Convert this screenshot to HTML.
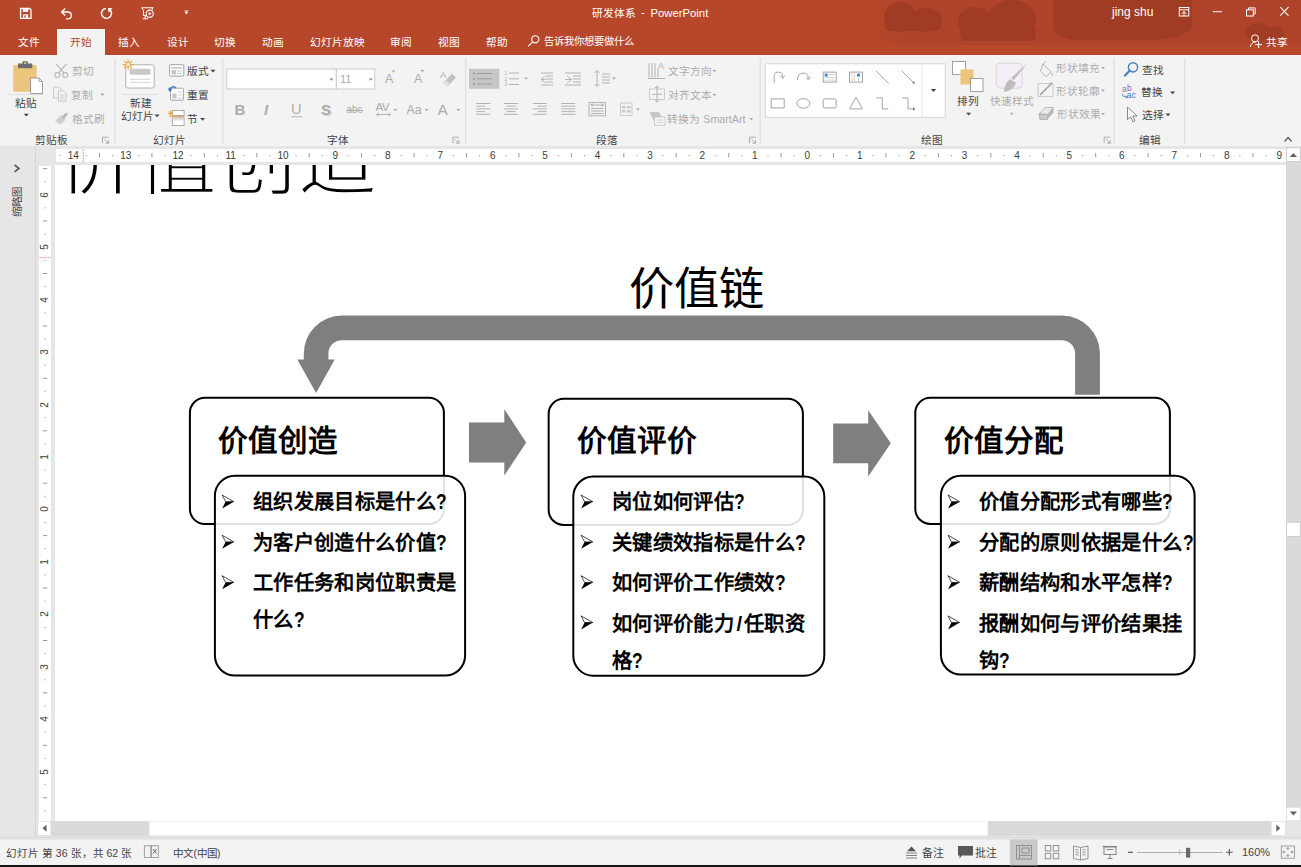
<!DOCTYPE html>
<html lang="zh-CN"><head><meta charset="utf-8"><title>PowerPoint</title>
<style>
*{margin:0;padding:0;box-sizing:border-box}
html,body{width:1301px;height:867px;overflow:hidden;background:#E6E6E6;font-family:"Liberation Sans",sans-serif;position:relative}
.a{position:absolute;white-space:nowrap;line-height:1}
.w{color:#fff}
.t{font-size:11px;color:#444}
.g{color:#A6A6A6}
.r{font-size:10.7px;color:#444}
.d{color:#ABABAB}
.rn{font-size:10px;color:#3C3C3C}
.bl{font-size:20.3px;letter-spacing:0.35px;font-weight:700;line-height:36.8px;color:#000;white-space:nowrap}
.bl i{display:block;height:3.8px}
.q{display:inline-block;transform:scale(0.86,1.1);transform-origin:0 62%;letter-spacing:0}
.hd{font-size:29.5px;font-weight:700;color:#000}
</style></head><body>

<!-- ===== TITLE BAR + TABS ===== -->
<div class="a" style="left:0;top:0;width:1301px;height:55px;background:#B7472A;overflow:hidden">
 <svg class="a" style="left:0;top:0" width="1301" height="55">
  <defs><linearGradient id="tg" x1="0" x2="1" y1="0" y2="0"><stop offset="0" stop-color="#A9412A" stop-opacity="0"/><stop offset="0.12" stop-color="#A9412A" stop-opacity="0.55"/><stop offset="1" stop-color="#A9412A" stop-opacity="0.55"/></linearGradient></defs>
  <rect x="860" y="0" width="441" height="45" fill="url(#tg)"/>
  <g fill="#A03C24">
   <ellipse cx="900" cy="17" rx="16" ry="15"/><ellipse cx="926" cy="20" rx="16" ry="12"/><rect x="885" y="18" width="56" height="13" rx="5"/>
   <ellipse cx="975" cy="22" rx="17" ry="15"/><ellipse cx="1012" cy="18" rx="24" ry="18"/><rect x="960" y="24" width="76" height="17" rx="6"/>
   <path d="M1053 0 L1192 0 L1192 28 Q1180 40 1150 40 L1075 40 Q1060 38 1053 30 Z"/>
   <ellipse cx="1258" cy="32" rx="13" ry="9"/><ellipse cx="1275" cy="33" rx="9" ry="7"/>
  </g>
 </svg>
 <div id="qat"></div>
 <span class="a w" style="left:592px;top:8px;font-size:10.7px">研发体系</span><span class="a w" style="left:641px;top:7px;font-size:11px">-</span><span class="a w" style="left:650.5px;top:7.5px;font-size:11.3px">PowerPoint</span>
 <span class="a w" style="left:1112px;top:6px;font-size:12px">jing shu</span>
 <!-- tabs -->
 <div class="a" style="left:57px;top:29px;width:48px;height:26px;background:#F3F3F3"></div>
 <span class="a w" style="left:18px;top:37px;font-size:10.7px">文件</span>
 <span class="a" style="left:70px;top:37px;font-size:10.7px;color:#B7472A">开始</span>
 <span class="a w" style="left:118px;top:37px;font-size:10.7px">插入</span>
 <span class="a w" style="left:167px;top:37px;font-size:10.7px">设计</span>
 <span class="a w" style="left:214px;top:37px;font-size:10.7px">切换</span>
 <span class="a w" style="left:262px;top:37px;font-size:10.7px">动画</span>
 <span class="a w" style="left:310px;top:37px;font-size:10.7px">幻灯片放映</span>
 <span class="a w" style="left:390px;top:37px;font-size:10.7px">审阅</span>
 <span class="a w" style="left:438px;top:37px;font-size:10.7px">视图</span>
 <span class="a w" style="left:486px;top:37px;font-size:10.7px">帮助</span>
 <span class="a w" style="left:543.5px;top:37.3px;font-size:10.35px">告诉我你想要做什么</span>
 <span class="a w" style="left:1266px;top:37px;font-size:10.7px">共享</span>
</div>

<!-- ===== RIBBON ===== -->
<div class="a" style="left:0;top:55px;width:1301px;height:91px;background:#F3F3F3"></div>
<!-- RIBBON-START -->
<svg class="a" style="left:0;top:0" width="1301" height="160"><rect x="114.5" y="58" width="1" height="86" fill="#DADADA"/><rect x="222.3" y="58" width="1" height="86" fill="#DADADA"/><rect x="465.2" y="58" width="1" height="86" fill="#DADADA"/><rect x="759.7" y="58" width="1" height="86" fill="#DADADA"/><rect x="1113.6" y="58" width="1" height="86" fill="#DADADA"/><rect x="1184.2" y="58" width="1" height="86" fill="#DADADA"/><rect x="13.2" y="64.9" width="23.5" height="26.8" rx="1.5" fill="#EAC57B"/><rect x="18" y="63.5" width="14.3" height="4.7" fill="#6D6D6D"/><rect x="22.5" y="61.3" width="5.3" height="3.5" rx="1" fill="#6D6D6D"/><rect x="24" y="62.4" width="2.3" height="1.5" fill="#EAC57B"/><path d="M30.5 78 L39 78 L42.5 81.5 L42.5 93.5 L30.5 93.5 Z" fill="#fff" stroke="#8A8A8A" stroke-width="0.8"/><path d="M39 78 L39 81.5 L42.5 81.5" fill="none" stroke="#8A8A8A" stroke-width="0.8"/><rect x="6.6" y="94" width="36.7" height="0.8" fill="#D9D9D9"/><path d="M23.8 113.8 L28.8 113.8 L26.3 116.5 Z" fill="#444"/><g fill="none" stroke="#B4B4B4" stroke-width="1.1"><circle cx="57.3" cy="75" r="2.5"/><circle cx="65.3" cy="75" r="2.5"/><path d="M58.5 72.8 L66.5 63.8 M64.1 72.8 L56 63.8"/></g><g fill="#F3F3F3" stroke="#C9C4CC" stroke-width="0.9"><path d="M53.5 87.2 L59 87.2 L61 89.2 L61 98 L53.5 98 Z"/><path d="M58.5 91 L64 91 L66 93 L66 101.3 L58.5 101.3 Z"/></g><g stroke="#C9C4CC" stroke-width="0.8"><path d="M60 95 L64.5 95 M60 97 L64.5 97 M60 99 L64.5 99"/></g><path d="M100.2 93.5 L104.8 93.5 L102.5 96.0 Z" fill="#ABABAB"/><path d="M55 121 L61 115.5 L65.5 120 L60 124.5 Z" fill="#D0CCD2"/><path d="M61.5 116.5 L66.5 112.5 L68 114 L64 119 Z" fill="#B8B4BA"/><path d="M102.5 143.2 L102.5 137.2 L108.5 137.2" fill="none" stroke="#9A9A9A" stroke-width="0.8"/><path d="M104.5 139.2 L108.5 143.2 M108.5 140.2 L108.5 143.2 L105.5 143.2" fill="none" stroke="#9A9A9A" stroke-width="0.8"/><rect x="125.8" y="64.8" width="28.4" height="23.2" rx="2" fill="#fff" stroke="#A8A8A8" stroke-width="0.9"/><rect x="129.7" y="68.7" width="20.8" height="6" fill="#C9C9C9"/><path d="M130 79.3 L150.5 79.3 M130 82.4 L150.5 82.4" stroke="#C9C9C9" stroke-width="0.8"/><g stroke="#E8A53A" stroke-width="1.1"><path d="M128.1 59.4 L128.1 69.8 M122.6 64.6 L133.6 64.6 M124.2 60.8 L132 68.4 M124.2 68.4 L132 60.8"/></g><circle cx="128.1" cy="64.6" r="2.2" fill="#F3F3F3" stroke="#E8A53A" stroke-width="0.9"/><rect x="121" y="94" width="37.8" height="0.8" fill="#D9D9D9"/><path d="M154.5 114.5 L159.5 114.5 L157.0 117.2 Z" fill="#444"/><rect x="169.6" y="64.7" width="14.2" height="11.4" rx="1" fill="#fff" stroke="#8E8E8E" stroke-width="0.8"/><rect x="171.5" y="67" width="10.5" height="1.6" fill="#C6C6C6"/><rect x="171.5" y="70" width="4.5" height="4.5" fill="#C6C6C6"/><path d="M177 71 L182 71 M177 73.5 L182 73.5" stroke="#C6C6C6" stroke-width="0.8"/><path d="M210.5 69.8 L215.5 69.8 L213.0 72.5 Z" fill="#444"/><rect x="170.6" y="88.2" width="12.8" height="12" rx="1" fill="#fff" stroke="#8E8E8E" stroke-width="0.8"/><rect x="172.5" y="93.5" width="4" height="5" fill="#C6C6C6"/><path d="M177.5 92 L182 92 M177.5 95 L182 95 M177.5 98 L182 98" stroke="#C6C6C6" stroke-width="0.8"/><path d="M169 90.5 Q172 84.5 176 88" fill="none" stroke="#3F7CC1" stroke-width="1.5"/><path d="M168 87.5 L169.6 92 L172.3 89.3 Z" fill="#3F7CC1"/><rect x="172.3" y="110.5" width="11.8" height="5" fill="#fff" stroke="#9A9A9A" stroke-width="0.8"/><rect x="172.3" y="118" width="11.8" height="7.5" fill="#fff" stroke="#9A9A9A" stroke-width="0.8"/><path d="M169.5 116.6 L184.5 116.6" stroke="#F0A860" stroke-width="1.2"/><path d="M173.5 119.8 L183 119.8" stroke="#C6C6C6" stroke-width="0.8"/><g stroke="#E8A53A" stroke-width="0.9"><path d="M170.6 110.3 L170.6 116 M167.8 113.2 L173.4 113.2 M168.6 111.2 L172.6 115.2 M168.6 115.2 L172.6 111.2"/></g><path d="M200.1 118.0 L205.1 118.0 L202.6 120.8 Z" fill="#444"/><rect x="226.8" y="69" width="109.5" height="20" fill="#fff" stroke="#C6C6C6" stroke-width="0.9"/><rect x="336.3" y="69" width="38.5" height="20" fill="#fff" stroke="#C6C6C6" stroke-width="0.9"/><path d="M329.5 78.5 L333.5 78.5 L331.5 80.7 Z" fill="#8A8A8A"/><path d="M368.8 78.5 L372.8 78.5 L370.8 80.7 Z" fill="#8A8A8A"/><path d="M391.5 70.5 L395.5 70.5 L393.5 72.7 Z" fill="#ABABAB"/><path d="M420.5 70 L424.5 70 L422.5 72.2 Z" fill="#ABABAB"/><path d="M446 80 L452 73.5 L456 77.5 L450 84 Z" fill="#C2C2C2"/><path d="M446 80 L450 84 L447.5 86 L443.5 82.5 Z" fill="#E3E3E3" stroke="#C2C2C2" stroke-width="0.6"/><rect x="291.5" y="116.3" width="10.7" height="0.9" fill="#ABABAB"/><rect x="346.4" y="110" width="16.8" height="0.9" fill="#ABABAB"/><path d="M376.5 114.5 L390.5 114.5 M376.5 114.5 L378.5 112.8 M376.5 114.5 L378.5 116.2 M390.5 114.5 L388.5 112.8 M390.5 114.5 L388.5 116.2" stroke="#ABABAB" stroke-width="0.9" fill="none"/><path d="M393.3 109.0 L397.3 109.0 L395.3 111.2 Z" fill="#ABABAB"/><path d="M424.6 109.0 L428.6 109.0 L426.6 111.2 Z" fill="#ABABAB"/><path d="M456.3 109.0 L460.3 109.0 L458.3 111.2 Z" fill="#ABABAB"/><path d="M452.9 143.2 L452.9 137.2 L458.9 137.2" fill="none" stroke="#9A9A9A" stroke-width="0.8"/><path d="M454.9 139.2 L458.9 143.2 M458.9 140.2 L458.9 143.2 L455.9 143.2" fill="none" stroke="#9A9A9A" stroke-width="0.8"/><rect x="469" y="68.8" width="30.3" height="20" fill="#C6C6C6"/><g stroke="#9A9A9A" stroke-width="0.9"><path d="M477 73.5 L492 73.5 M477 78.8 L492 78.8 M477 84 L492 84"/></g><g fill="#9A9A9A"><circle cx="474" cy="73.5" r="0.9"/><circle cx="474" cy="78.8" r="0.9"/><circle cx="474" cy="84" r="0.9"/></g><g stroke="#ABABAB" stroke-width="0.9"><path d="M509 73 L519 73 M509 78.8 L519 78.8 M509 84.5 L519 84.5"/></g><path d="M524.0 77.5 L528.0 77.5 L526.0 79.7 Z" fill="#ABABAB"/><g stroke="#ABABAB" stroke-width="0.9"><path d="M541 73 L553 73 M546 76 L553 76 M546 79 L553 79 M546 82 L553 82 M541 85 L553 85"/><path d="M541 79.5 L545.5 76 M541 79.5 L545.5 83 M541 79.5 L545.5 79.5"/></g><g stroke="#ABABAB" stroke-width="0.9"><path d="M565 73 L581 73 M573 76 L581 76 M573 79 L581 79 M573 82 L581 82 M565 85 L581 85"/><path d="M571.5 79.5 L567 76 M571.5 79.5 L567 83 M571.5 79.5 L565 79.5"/></g><g stroke="#ABABAB" stroke-width="0.9" fill="none"><path d="M597 70.5 L597 86.5 M594.5 73 L597 70.5 L599.5 73 M594.5 84 L597 86.5 L599.5 84"/><path d="M602 74 L610 74 M602 77 L610 77 M602 80 L610 80 M602 83 L610 83"/></g><path d="M612.0 77.5 L616.0 77.5 L614.0 79.7 Z" fill="#ABABAB"/><path d="M476.2 103.5 L490.2 103.5 M476.2 106.2 L485.2 106.2 M476.2 108.9 L490.2 108.9 M476.2 111.6 L485.2 111.6 M476.2 114.3 L490.2 114.3 " stroke="#ABABAB" stroke-width="0.9"/><path d="M504.0 103.5 L518.0 103.5 M506.5 106.2 L515.5 106.2 M504.0 108.9 L518.0 108.9 M506.5 111.6 L515.5 111.6 M504.0 114.3 L518.0 114.3 " stroke="#ABABAB" stroke-width="0.9"/><path d="M532.7 103.5 L546.7 103.5 M537.7 106.2 L546.7 106.2 M532.7 108.9 L546.7 108.9 M537.7 111.6 L546.7 111.6 M532.7 114.3 L546.7 114.3 " stroke="#ABABAB" stroke-width="0.9"/><path d="M561.3 103.5 L575.3 103.5 M561.3 106.2 L575.3 106.2 M561.3 108.9 L575.3 108.9 M561.3 111.6 L575.3 111.6 M561.3 114.3 L575.3 114.3 " stroke="#ABABAB" stroke-width="0.9"/><g stroke="#ABABAB" stroke-width="0.9" fill="none"><rect x="589" y="102.6" width="16.5" height="13.2"/><path d="M591 105 L603.5 105 M591 105 L593 103.7 M591 105 L593 106.3 M603.5 105 L601.5 103.7 M603.5 105 L601.5 106.3 M591 108.5 L603.5 108.5 M591 111 L603.5 111 M591 113.5 L603.5 113.5"/></g><g stroke="#C9C4CC" stroke-width="0.9" fill="none"><rect x="620.5" y="103" width="11.5" height="12.5"/></g><g fill="#C9C9C9"><rect x="622" y="106" width="3.5" height="2.5"/><rect x="627" y="106" width="3.5" height="2.5"/><rect x="622" y="110" width="3.5" height="2.5"/><rect x="627" y="110" width="3.5" height="2.5"/></g><path d="M636.0 108.5 L640.0 108.5 L638.0 110.7 Z" fill="#ABABAB"/><g stroke="#ABABAB" stroke-width="0.9" fill="none"><path d="M649 63 L649 77.5 M652 63 L652 77.5 M655 63 L655 77.5 M658 69 L658 77.5 M648 78.5 L665 78.5"/></g><path d="M712.5 70.0 L716.5 70.0 L714.5 72.2 Z" fill="#ABABAB"/><g stroke="#C9C4CC" stroke-width="0.9" fill="#F7F4F8"><rect x="649.5" y="89" width="15" height="10.5"/></g><g stroke="#ABABAB" stroke-width="0.9" fill="none"><path d="M657 86 L657 102.2 M655 88 L657 86 L659 88 M655 100.2 L657 102.2 L659 100.2 M652 94.3 L662 94.3"/></g><path d="M712.5 94.0 L716.5 94.0 L714.5 96.2 Z" fill="#ABABAB"/><g fill="#C7C7C7"><path d="M649.4 112 L659 112 L663 120 L653.5 120 Z"/></g><g stroke="#C9C4CC" stroke-width="0.9" fill="#F7F4F8"><rect x="654.5" y="117" width="10.5" height="8.3"/></g><path d="M656.5 120 L663 120 M656.5 122.5 L663 122.5" stroke="#C9C9C9" stroke-width="0.8"/><path d="M749.2 118.0 L753.2 118.0 L751.2 120.2 Z" fill="#ABABAB"/><path d="M749.5 143.2 L749.5 137.2 L755.5 137.2" fill="none" stroke="#9A9A9A" stroke-width="0.8"/><path d="M751.5 139.2 L755.5 143.2 M755.5 140.2 L755.5 143.2 L752.5 143.2" fill="none" stroke="#9A9A9A" stroke-width="0.8"/><rect x="765.2" y="63.8" width="180" height="53.5" fill="#fff" stroke="#D2D2D2" stroke-width="0.9"/><rect x="921.6" y="64" width="0.9" height="53" fill="#E2E2E2"/><path d="M930.8 89.0 L936.2 89.0 L933.5 92.0 Z" fill="#444"/><g stroke="#9A9A9A" stroke-width="0.9" fill="none"><path d="M774.2 83.1 L774.2 76.1 Q774.2 72.1 778.7 72.1 Q782.7 72.1 782.7 77.1 M780.2 75.6 L782.7 78.6 L784.7 75.6"/><path d="M797.4 80.1 Q797.4 73.1 803.4 73.1 Q808.4 73.1 808.4 78.1 M806.4 77.1 L808.4 80.1 L810.4 77.1"/><rect x="823.2" y="72.1" width="13" height="10"/><rect x="849.5" y="72.1" width="13" height="10"/><path d="M875.8 70.6 L888.8 83.6"/><path d="M901.5 70.6 L914.5 83.6"/><rect x="771.2" y="98.9" width="13" height="9"/><ellipse cx="803.4" cy="103.4" rx="6.5" ry="4.8"/><rect x="823.2" y="98.9" width="13" height="9" rx="1.5"/><path d="M849.5 108.9 L856 97.4 L862.5 108.9 Z"/><path d="M876.3 97.9 L882.3 97.9 L882.3 108.9 L888.3 108.9"/><path d="M902 97.9 L908 97.9 L908 108.9 L914 108.9"/></g><g fill="#7F7F7F"><path d="M915 84.1 L912 83.1 L914 81.1 Z"/><path d="M915.5 108.9 L913 106.9 L913 110.9 Z"/></g><g fill="#4A8ACB"><rect x="824.7" y="73.6" width="3" height="3"/><rect x="857" y="73.6" width="3" height="3"/></g><g stroke="#BBBBBB" stroke-width="0.7"><path d="M828.7 74.6 L834.7 74.6 M824.7 77.6 L834.7 77.6 M824.7 80.1 L834.7 80.1 M852 73.1 L852 81.1 M854.5 73.1 L854.5 81.1 M858.5 77.6 L858.5 81.1"/></g><rect x="952.5" y="61.5" width="13" height="13" fill="#fff" stroke="#8A8A8A" stroke-width="0.8"/><rect x="960.5" y="69.5" width="13" height="15" fill="#EAC57B"/><rect x="970.5" y="78.5" width="12.5" height="13" fill="#fff" stroke="#8A8A8A" stroke-width="0.8"/><path d="M966.1 112.8 L971.1 112.8 L968.6 115.5 Z" fill="#444"/><rect x="996.2" y="63.2" width="26" height="25" rx="4" fill="#F4EEF6" stroke="#D8CFDC" stroke-width="0.9"/><path d="M1027.5 63 L1014 80 L1011 78 Z" fill="#BDBDBD"/><path d="M1010 79 Q1004 84 1004 92 Q1013 91 1016 83 Z" fill="#BDBDBD"/><path d="M1009.8 112.8 L1013.8 112.8 L1011.8 115.0 Z" fill="#ABABAB"/><g stroke="#ABABAB" stroke-width="0.9" fill="none"><path d="M1043 64 L1051 72 L1046 76.5 L1040.5 71 Z M1043 64 L1046 61"/></g><path d="M1052 72 Q1053.5 75 1052.5 76 Q1051 75 1052 72 Z" fill="#ABABAB"/><path d="M1101.0 67.0 L1105.0 67.0 L1103.0 69.2 Z" fill="#ABABAB"/><g stroke="#ABABAB" stroke-width="0.9" fill="none"><path d="M1038 83.5 L1053 83.5 L1053 96.5 L1038 96.5 Z" stroke="#C9C4CC"/><path d="M1040 95 L1052 83" stroke="#9A9A9A" stroke-width="1.4"/></g><path d="M1101.0 89.5 L1105.0 89.5 L1103.0 91.7 Z" fill="#ABABAB"/><path d="M1039 114 L1045 107.5 L1053.5 107.5 L1047.5 114.5 Z" fill="#E9E9E9" stroke="#ABABAB" stroke-width="0.8"/><path d="M1039 114 L1047.5 114.5 L1047.5 119.5 L1040 119.5 Z" fill="#C9C9C9" stroke="#ABABAB" stroke-width="0.8"/><path d="M1047.5 114.5 L1053.5 107.5 L1053.5 112.5 L1047.5 119.5 Z" fill="#B8B8B8"/><path d="M1101.0 113.0 L1105.0 113.0 L1103.0 115.2 Z" fill="#ABABAB"/><path d="M1104.2 143.2 L1104.2 137.2 L1110.2 137.2" fill="none" stroke="#9A9A9A" stroke-width="0.8"/><path d="M1106.2 139.2 L1110.2 143.2 M1110.2 140.2 L1110.2 143.2 L1107.2 143.2" fill="none" stroke="#9A9A9A" stroke-width="0.8"/><circle cx="1133" cy="67.3" r="4.6" fill="none" stroke="#4682C3" stroke-width="1.5"/><path d="M1129.8 70.5 L1125 75.5" stroke="#4682C3" stroke-width="2.2" stroke-linecap="round"/><path d="M1122.5 94 Q1122.5 97 1125.5 97 L1127 97 M1125.8 95.6 L1127.2 97 L1125.8 98.4" fill="none" stroke="#3E7CC0" stroke-width="0.9"/><path d="M1170.1 91.5 L1175.1 91.5 L1172.6 94.2 Z" fill="#444"/><path d="M1127.5 107 L1127.5 119.5 L1130.5 116.8 L1133 122 L1135 121 L1132.8 116 L1137 116 Z" fill="#fff" stroke="#6A6A6A" stroke-width="0.8" stroke-linejoin="round"/><path d="M1165.5 113.5 L1170.5 113.5 L1168.0 116.2 Z" fill="#444"/><path d="M1284.6 141.5 L1288.1 137.5 L1291.6 141.5" fill="none" stroke="#555" stroke-width="1.2"/></svg>
<span class="a r" style="left:14.8px;top:98px;">粘贴</span>
<span class="a r d" style="left:71.8px;top:66.3px;">剪切</span>
<span class="a r d" style="left:70.7px;top:89.8px;">复制</span>
<span class="a r d" style="left:71.8px;top:114px;">格式刷</span>
<span class="a r" style="left:35px;top:134.8px;">剪贴板</span>
<span class="a r" style="left:129.7px;top:97.6px;">新建</span>
<span class="a r" style="left:121px;top:110.8px;">幻灯片</span>
<span class="a r" style="left:187.3px;top:65.8px;">版式</span>
<span class="a r" style="left:187.3px;top:89.8px;">重置</span>
<span class="a r" style="left:187.3px;top:114px;">节</span>
<span class="a r" style="left:152.7px;top:135px;">幻灯片</span>
<span class="a r d" style="left:340px;top:74px;font-size:11px">11</span>
<span class="a r d" style="left:385px;top:72.5px;font-size:12.5px">A</span>
<span class="a r d" style="left:414px;top:72.5px;font-size:12.5px">A</span>
<span class="a r d" style="left:440px;top:70px;font-size:9.5px">A</span>
<span class="a r d" style="left:234.5px;top:102px;font-size:15px;font-weight:700">B</span>
<span class="a r d" style="left:264px;top:102px;font-size:15px;font-style:italic;font-weight:700">I</span>
<span class="a r d" style="left:291px;top:102px;font-size:14.5px">U</span>
<span class="a r d" style="left:321px;top:102px;font-size:15px;font-weight:700;text-shadow:1px 1px 0 #D8D8D8">S</span>
<span class="a r d" style="left:346.5px;top:105px;font-size:10px">abc</span>
<span class="a r d" style="left:375.5px;top:101.5px;font-size:11.5px;letter-spacing:-0.5px">AV</span>
<span class="a r d" style="left:406.5px;top:103.5px;font-size:12.5px">Aa</span>
<span class="a r d" style="left:437.5px;top:101.5px;font-size:15.5px">A</span>
<span class="a r" style="left:326.6px;top:134.8px;">字体</span>
<span class="a r d" style="left:504.5px;top:70.8px;font-size:5px">1</span>
<span class="a r d" style="left:504.5px;top:76.6px;font-size:5px">2</span>
<span class="a r d" style="left:504.5px;top:82.3px;font-size:5px">3</span>
<span class="a r d" style="left:658px;top:61.5px;font-size:9px">A</span>
<span class="a r d" style="left:667.8px;top:66px;">文字方向</span>
<span class="a r d" style="left:667.8px;top:89.8px;">对齐文本</span>
<span class="a r d" style="left:667.3px;top:113.8px;">转换为 SmartArt</span>
<span class="a r" style="left:595.8px;top:134.8px;">段落</span>
<span class="a r" style="left:957px;top:96px;">排列</span>
<span class="a r d" style="left:989.6px;top:96px;">快速样式</span>
<span class="a r d" style="left:1056px;top:63.3px;">形状填充</span>
<span class="a r d" style="left:1056px;top:85.8px;">形状轮廓</span>
<span class="a r d" style="left:1057.2px;top:109.3px;">形状效果</span>
<span class="a r" style="left:920.5px;top:134.8px;">绘图</span>
<span class="a r" style="left:1141.7px;top:64.8px;">查找</span>
<span class="a r" style="left:1122px;top:84.5px;font-size:8.5px;color:#7F7F7F">a</span>
<span class="a r" style="left:1127px;top:84px;font-size:8.5px;color:#9B59B6">b</span>
<span class="a r" style="left:1126.5px;top:90.5px;font-size:9px;color:#3E7CC0">ac</span>
<span class="a r" style="left:1141px;top:87.2px;">替换</span>
<span class="a r" style="left:1141.7px;top:109.6px;">选择</span>
<span class="a r" style="left:1138.6px;top:134.6px;">编辑</span>
<!-- RIBBON-END -->

<!-- ===== WORK AREA ===== -->
<!-- thumbnails collapsed pane -->
<div class="a" style="left:35px;top:146px;width:1px;height:692px;background:#D4D4D4"></div>
<!-- horizontal ruler -->
<div class="a" style="left:56px;top:149px;width:1230px;height:13px;background:#fff"></div>
<!-- vertical ruler -->
<div class="a" style="left:39px;top:166px;width:12px;height:655px;background:#fff"></div>

<!-- slide viewport -->
<div class="a" style="left:55px;top:165px;width:1231px;height:656px;background:#fff;overflow:hidden">
 <div class="a" style="left:-55px;top:-165px;width:1301px;height:867px">
  <span class="a" style="left:57px;top:121px;font-size:80px;color:#000;-webkit-text-stroke:2.4px #fff">价值创造</span>
  <span class="a" style="left:628.5px;top:267px;font-size:45.3px;color:#000">价值链</span>
  <svg class="a" style="left:0;top:0" width="1301" height="867">
   <path fill="#7F7F7F" d="M1099.9 394.8 L1099.9 353.5 A38 38 0 0 0 1061.9 315.5 L341.8 315.5 A38 38 0 0 0 303.8 353.5 L303.8 359.5 L297.3 359.5 L316.1 393 L334.7 359.5 L328.4 359.5 L328.4 353.5 A13.3 13.3 0 0 1 341.7 340.2 L1061.8 340.2 A13.3 13.3 0 0 1 1075.1 353.5 L1075.1 394.8 Z"/>
   <path fill="#7F7F7F" d="M469 422.6 L504.3 422.6 L504.3 409.2 L526.2 442.4 L504.3 475.6 L504.3 462.5 L469 462.5 Z"/>
   <path fill="#7F7F7F" d="M833.2 423.5 L868.2 423.5 L868.2 410.3 L890.8 443.2 L868.2 476.4 L868.2 463.2 L833.2 463.2 Z"/>
   <g fill="#fff" stroke="#000" stroke-width="2">
    <rect x="189.9" y="397.8" width="254" height="126.2" rx="15"/>
    <rect x="548.65" y="398.8" width="254.25" height="126.1" rx="15"/>
    <rect x="915.3" y="397.8" width="254.6" height="126.1" rx="15"/>
   </g>
   <g fill="#fff" fill-opacity="0.88" stroke="#000" stroke-width="2">
    <rect x="214.9" y="475.75" width="250.2" height="199.85" rx="20"/>
    <rect x="573.3" y="476.6" width="251" height="199.15" rx="20"/>
    <rect x="940.9" y="475.75" width="253.7" height="198.85" rx="20"/>
   </g>
   <g id="bullets"><path d="M222.1 495.0 L233.8 501.7 L225.6 501.7 Z" fill="#fff" stroke="#000" stroke-width="0.7" stroke-linejoin="miter"/><path d="M225.6 501.7 L233.8 501.7 L222.1 508.6 Z" fill="#000"/><path d="M222.1 535.2 L233.8 541.9 L225.6 541.9 Z" fill="#fff" stroke="#000" stroke-width="0.7" stroke-linejoin="miter"/><path d="M225.6 541.9 L233.8 541.9 L222.1 548.8 Z" fill="#000"/><path d="M222.1 575.7 L233.8 582.4 L225.6 582.4 Z" fill="#fff" stroke="#000" stroke-width="0.7" stroke-linejoin="miter"/><path d="M225.6 582.4 L233.8 582.4 L222.1 589.3 Z" fill="#000"/><path d="M581.1 495.0 L592.8 501.7 L584.6 501.7 Z" fill="#fff" stroke="#000" stroke-width="0.7" stroke-linejoin="miter"/><path d="M584.6 501.7 L592.8 501.7 L581.1 508.6 Z" fill="#000"/><path d="M581.1 535.2 L592.8 541.9 L584.6 541.9 Z" fill="#fff" stroke="#000" stroke-width="0.7" stroke-linejoin="miter"/><path d="M584.6 541.9 L592.8 541.9 L581.1 548.8 Z" fill="#000"/><path d="M581.1 575.7 L592.8 582.4 L584.6 582.4 Z" fill="#fff" stroke="#000" stroke-width="0.7" stroke-linejoin="miter"/><path d="M584.6 582.4 L592.8 582.4 L581.1 589.3 Z" fill="#000"/><path d="M581.1 615.9 L592.8 622.6 L584.6 622.6 Z" fill="#fff" stroke="#000" stroke-width="0.7" stroke-linejoin="miter"/><path d="M584.6 622.6 L592.8 622.6 L581.1 629.5 Z" fill="#000"/><path d="M948.0 495.0 L959.7 501.7 L951.5 501.7 Z" fill="#fff" stroke="#000" stroke-width="0.7" stroke-linejoin="miter"/><path d="M951.5 501.7 L959.7 501.7 L948.0 508.6 Z" fill="#000"/><path d="M948.0 535.2 L959.7 541.9 L951.5 541.9 Z" fill="#fff" stroke="#000" stroke-width="0.7" stroke-linejoin="miter"/><path d="M951.5 541.9 L959.7 541.9 L948.0 548.8 Z" fill="#000"/><path d="M948.0 575.7 L959.7 582.4 L951.5 582.4 Z" fill="#fff" stroke="#000" stroke-width="0.7" stroke-linejoin="miter"/><path d="M951.5 582.4 L959.7 582.4 L948.0 589.3 Z" fill="#000"/><path d="M948.0 615.9 L959.7 622.6 L951.5 622.6 Z" fill="#fff" stroke="#000" stroke-width="0.7" stroke-linejoin="miter"/><path d="M951.5 622.6 L959.7 622.6 L948.0 629.5 Z" fill="#000"/></g>
  </svg>
  <span class="a hd" style="left:217.5px;top:426px">价值创造</span>
  <span class="a hd" style="left:576.5px;top:426px">价值评价</span>
  <span class="a hd" style="left:943.5px;top:426px">价值分配</span>
  <div class="a bl" style="left:253px;top:484px">组织发展目标是什么<span class="q">?</span><br><i></i>为客户创造什么价值<span class="q">?</span><br><i></i>工作任务和岗位职责是<br>什么<span class="q">?</span></div>
  <div class="a bl" style="left:612px;top:484px">岗位如何评估<span class="q">?</span><br><i></i>关键绩效指标是什么<span class="q">?</span><br><i></i>如何评价工作绩效<span class="q">?</span><br><i></i>如何评价能力<span style="margin:0 1.5px 0 2.5px">/</span>任职资<br>格<span class="q">?</span></div>
  <div class="a bl" style="left:979px;top:484px">价值分配形式有哪些<span class="q">?</span><br><i></i>分配的原则依据是什么<span class="q">?</span><br><i></i>薪酬结构和水平怎样<span class="q">?</span><br><i></i>报酬如何与评价结果挂<br>钩<span class="q">?</span></div>
 </div>
</div>

<!-- scrollbars -->
<div class="a" style="left:1286px;top:147px;width:15px;height:674px;background:#DADADA"></div>
<div class="a" style="left:37px;top:821px;width:1249px;height:15px;background:#DADADA"></div>

<!-- ===== STATUS BAR ===== -->
<div class="a" style="left:0;top:837px;width:1301px;height:1px;background:#D8D8D8"></div>
<div class="a" style="left:0;top:840px;width:1301px;height:27px;background:#F3F3F3"></div>
<div class="a" style="left:0;top:865px;width:1301px;height:2px;background:#151515"></div>
<!-- CHROME-START -->
<svg class="a" style="left:0;top:0" width="1301" height="867"><g fill="none" stroke="#fff" stroke-width="1.3"><path d="M20.6 8.3 L29.5 8.3 L31 9.8 L31 18.3 L20.6 18.3 Z"/></g><rect x="22.8" y="8.3" width="5.6" height="3.6" fill="#fff"/><rect x="23" y="14.3" width="5.2" height="4" fill="#fff"/><rect x="24.4" y="15.3" width="1.4" height="2.4" fill="#B7472A"/><g fill="none" stroke="#fff" stroke-width="1.3"><path d="M62.5 12 L67.5 12 Q71.3 12 71.3 15.5 Q71.3 18.8 67.8 18.8 L66 18.8"/><path d="M65.2 8.5 L61.6 12 L65.2 15.5"/></g><path d="M105.9 8.4 A5 5 0 1 0 110.3 10.1" fill="none" stroke="#fff" stroke-width="1.5"/><path d="M107.9 8 L112.4 8.2 L108.6 12.7 Z" fill="#fff"/><g fill="none" stroke="#fff" stroke-width="1.1"><path d="M141.3 7.8 L153.5 7.8 M142.5 7.8 L142.5 9.8 M152.3 7.8 L152.3 9.8"/><path d="M143.5 10 L143.5 15.5 L147 15.5 M145.2 15.5 L145.2 18.5 M142.8 18.8 L148 18.8"/><circle cx="149.7" cy="13.7" r="3.6"/></g><path d="M148.6 11.8 L151.6 13.7 L148.6 15.6 Z" fill="#fff"/><path d="M184.5 11.5 L188.3 11.5 L186.4 14.6 Z" fill="#fff"/><rect x="184.5" y="10" width="3.8" height="0.8" fill="#fff" opacity="0.6"/><g fill="none" stroke="#fff" stroke-width="1"><rect x="1179.3" y="7.5" width="9.5" height="8.5"/><path d="M1179.3 9.8 L1188.8 9.8"/><path d="M1181.5 14 L1184 11.5 L1186.5 14 M1184 11.5 L1184 16"/></g><rect x="1212.8" y="11.2" width="9.2" height="1" fill="#fff"/><g fill="none" stroke="#fff" stroke-width="1"><rect x="1246.5" y="9.8" width="6.8" height="6.2"/><path d="M1248.5 9.8 L1248.5 7.9 L1255.2 7.9 L1255.2 14 L1253.3 14"/></g><path d="M1280.2 7.2 L1288.5 15.6 M1288.5 7.2 L1280.2 15.6" stroke="#fff" stroke-width="1.1"/><g fill="none" stroke="#fff" stroke-width="1"><circle cx="1255" cy="38.3" r="3.5"/><path d="M1250.3 47 Q1250.8 42.3 1256 41.8"/><path d="M1255.2 44.6 L1262 44.6 M1258.6 41.2 L1258.6 48"/></g><g fill="none" stroke="#fff" stroke-width="1.1"><circle cx="535.3" cy="39.3" r="3.6"/><path d="M532.7 41.9 L528.2 46.4"/></g><rect x="59.7" y="155" width="1" height="1.2" fill="#9A9A9A"/><rect x="85.9" y="155" width="1" height="1.2" fill="#9A9A9A"/><rect x="99.0" y="153" width="1" height="4.4" fill="#9A9A9A"/><rect x="112.1" y="155" width="1" height="1.2" fill="#9A9A9A"/><rect x="138.3" y="155" width="1" height="1.2" fill="#9A9A9A"/><rect x="151.4" y="153" width="1" height="4.4" fill="#9A9A9A"/><rect x="164.5" y="155" width="1" height="1.2" fill="#9A9A9A"/><rect x="190.7" y="155" width="1" height="1.2" fill="#9A9A9A"/><rect x="203.9" y="153" width="1" height="4.4" fill="#9A9A9A"/><rect x="217.0" y="155" width="1" height="1.2" fill="#9A9A9A"/><rect x="243.2" y="155" width="1" height="1.2" fill="#9A9A9A"/><rect x="256.3" y="153" width="1" height="4.4" fill="#9A9A9A"/><rect x="269.4" y="155" width="1" height="1.2" fill="#9A9A9A"/><rect x="295.6" y="155" width="1" height="1.2" fill="#9A9A9A"/><rect x="308.7" y="153" width="1" height="4.4" fill="#9A9A9A"/><rect x="321.8" y="155" width="1" height="1.2" fill="#9A9A9A"/><rect x="348.0" y="155" width="1" height="1.2" fill="#9A9A9A"/><rect x="361.1" y="153" width="1" height="4.4" fill="#9A9A9A"/><rect x="374.3" y="155" width="1" height="1.2" fill="#9A9A9A"/><rect x="400.5" y="155" width="1" height="1.2" fill="#9A9A9A"/><rect x="413.6" y="153" width="1" height="4.4" fill="#9A9A9A"/><rect x="426.7" y="155" width="1" height="1.2" fill="#9A9A9A"/><rect x="452.9" y="155" width="1" height="1.2" fill="#9A9A9A"/><rect x="466.0" y="153" width="1" height="4.4" fill="#9A9A9A"/><rect x="479.1" y="155" width="1" height="1.2" fill="#9A9A9A"/><rect x="505.3" y="155" width="1" height="1.2" fill="#9A9A9A"/><rect x="518.4" y="153" width="1" height="4.4" fill="#9A9A9A"/><rect x="531.5" y="155" width="1" height="1.2" fill="#9A9A9A"/><rect x="557.8" y="155" width="1" height="1.2" fill="#9A9A9A"/><rect x="570.9" y="153" width="1" height="4.4" fill="#9A9A9A"/><rect x="584.0" y="155" width="1" height="1.2" fill="#9A9A9A"/><rect x="610.2" y="155" width="1" height="1.2" fill="#9A9A9A"/><rect x="623.3" y="153" width="1" height="4.4" fill="#9A9A9A"/><rect x="636.4" y="155" width="1" height="1.2" fill="#9A9A9A"/><rect x="662.6" y="155" width="1" height="1.2" fill="#9A9A9A"/><rect x="675.7" y="153" width="1" height="4.4" fill="#9A9A9A"/><rect x="688.8" y="155" width="1" height="1.2" fill="#9A9A9A"/><rect x="715.0" y="155" width="1" height="1.2" fill="#9A9A9A"/><rect x="728.2" y="153" width="1" height="4.4" fill="#9A9A9A"/><rect x="741.3" y="155" width="1" height="1.2" fill="#9A9A9A"/><rect x="767.5" y="155" width="1" height="1.2" fill="#9A9A9A"/><rect x="780.6" y="153" width="1" height="4.4" fill="#9A9A9A"/><rect x="793.7" y="155" width="1" height="1.2" fill="#9A9A9A"/><rect x="819.9" y="155" width="1" height="1.2" fill="#9A9A9A"/><rect x="833.0" y="153" width="1" height="4.4" fill="#9A9A9A"/><rect x="846.1" y="155" width="1" height="1.2" fill="#9A9A9A"/><rect x="872.3" y="155" width="1" height="1.2" fill="#9A9A9A"/><rect x="885.4" y="153" width="1" height="4.4" fill="#9A9A9A"/><rect x="898.6" y="155" width="1" height="1.2" fill="#9A9A9A"/><rect x="924.8" y="155" width="1" height="1.2" fill="#9A9A9A"/><rect x="937.9" y="153" width="1" height="4.4" fill="#9A9A9A"/><rect x="951.0" y="155" width="1" height="1.2" fill="#9A9A9A"/><rect x="977.2" y="155" width="1" height="1.2" fill="#9A9A9A"/><rect x="990.3" y="153" width="1" height="4.4" fill="#9A9A9A"/><rect x="1003.4" y="155" width="1" height="1.2" fill="#9A9A9A"/><rect x="1029.6" y="155" width="1" height="1.2" fill="#9A9A9A"/><rect x="1042.7" y="153" width="1" height="4.4" fill="#9A9A9A"/><rect x="1055.8" y="155" width="1" height="1.2" fill="#9A9A9A"/><rect x="1082.1" y="155" width="1" height="1.2" fill="#9A9A9A"/><rect x="1095.2" y="153" width="1" height="4.4" fill="#9A9A9A"/><rect x="1108.3" y="155" width="1" height="1.2" fill="#9A9A9A"/><rect x="1134.5" y="155" width="1" height="1.2" fill="#9A9A9A"/><rect x="1147.6" y="153" width="1" height="4.4" fill="#9A9A9A"/><rect x="1160.7" y="155" width="1" height="1.2" fill="#9A9A9A"/><rect x="1186.9" y="155" width="1" height="1.2" fill="#9A9A9A"/><rect x="1200.0" y="153" width="1" height="4.4" fill="#9A9A9A"/><rect x="1213.1" y="155" width="1" height="1.2" fill="#9A9A9A"/><rect x="1239.3" y="155" width="1" height="1.2" fill="#9A9A9A"/><rect x="1252.5" y="153" width="1" height="4.4" fill="#9A9A9A"/><rect x="1265.6" y="155" width="1" height="1.2" fill="#9A9A9A"/><path d="M83.3 149.5 L83.3 162" stroke="#E77B5E" stroke-width="0.9" stroke-dasharray="1.5 1.2"/><rect x="42.8" y="168.1" width="4.4" height="1" fill="#9A9A9A"/><rect x="44.4" y="181.2" width="1.2" height="1" fill="#9A9A9A"/><rect x="44.4" y="207.4" width="1.2" height="1" fill="#9A9A9A"/><rect x="42.8" y="220.5" width="4.4" height="1" fill="#9A9A9A"/><rect x="44.4" y="233.6" width="1.2" height="1" fill="#9A9A9A"/><rect x="44.4" y="259.9" width="1.2" height="1" fill="#9A9A9A"/><rect x="42.8" y="273.0" width="4.4" height="1" fill="#9A9A9A"/><rect x="44.4" y="286.1" width="1.2" height="1" fill="#9A9A9A"/><rect x="44.4" y="312.3" width="1.2" height="1" fill="#9A9A9A"/><rect x="42.8" y="325.4" width="4.4" height="1" fill="#9A9A9A"/><rect x="44.4" y="338.5" width="1.2" height="1" fill="#9A9A9A"/><rect x="44.4" y="364.7" width="1.2" height="1" fill="#9A9A9A"/><rect x="42.8" y="377.8" width="4.4" height="1" fill="#9A9A9A"/><rect x="44.4" y="390.9" width="1.2" height="1" fill="#9A9A9A"/><rect x="44.4" y="417.1" width="1.2" height="1" fill="#9A9A9A"/><rect x="42.8" y="430.3" width="4.4" height="1" fill="#9A9A9A"/><rect x="44.4" y="443.4" width="1.2" height="1" fill="#9A9A9A"/><rect x="44.4" y="469.6" width="1.2" height="1" fill="#9A9A9A"/><rect x="42.8" y="482.7" width="4.4" height="1" fill="#9A9A9A"/><rect x="44.4" y="495.8" width="1.2" height="1" fill="#9A9A9A"/><rect x="44.4" y="522.0" width="1.2" height="1" fill="#9A9A9A"/><rect x="42.8" y="535.1" width="4.4" height="1" fill="#9A9A9A"/><rect x="44.4" y="548.2" width="1.2" height="1" fill="#9A9A9A"/><rect x="44.4" y="574.4" width="1.2" height="1" fill="#9A9A9A"/><rect x="42.8" y="587.5" width="4.4" height="1" fill="#9A9A9A"/><rect x="44.4" y="600.7" width="1.2" height="1" fill="#9A9A9A"/><rect x="44.4" y="626.9" width="1.2" height="1" fill="#9A9A9A"/><rect x="42.8" y="640.0" width="4.4" height="1" fill="#9A9A9A"/><rect x="44.4" y="653.1" width="1.2" height="1" fill="#9A9A9A"/><rect x="44.4" y="679.3" width="1.2" height="1" fill="#9A9A9A"/><rect x="42.8" y="692.4" width="4.4" height="1" fill="#9A9A9A"/><rect x="44.4" y="705.5" width="1.2" height="1" fill="#9A9A9A"/><rect x="44.4" y="731.7" width="1.2" height="1" fill="#9A9A9A"/><rect x="42.8" y="744.8" width="4.4" height="1" fill="#9A9A9A"/><rect x="44.4" y="757.9" width="1.2" height="1" fill="#9A9A9A"/><rect x="44.4" y="784.2" width="1.2" height="1" fill="#9A9A9A"/><rect x="42.8" y="797.3" width="4.4" height="1" fill="#9A9A9A"/><rect x="44.4" y="810.4" width="1.2" height="1" fill="#9A9A9A"/><path d="M39.5 257.6 L51 257.6" stroke="#E77B5E" stroke-width="0.9" stroke-dasharray="1.5 1.2"/><path d="M14.6 165 L18.9 168.4 L14.6 171.8" fill="none" stroke="#555" stroke-width="1.6"/><rect x="1286.5" y="147.8" width="13.8" height="13.8" fill="#fff" stroke="#C6C6C6" stroke-width="0.8"/><path d="M1289.8 157 L1297 157 L1293.4 153 Z" fill="#606060"/><rect x="1286.5" y="522.2" width="13.8" height="14.2" fill="#fff" stroke="#C6C6C6" stroke-width="0.8"/><rect x="1286.5" y="807.5" width="13.8" height="13" fill="#fff" stroke="#E0E0E0" stroke-width="0.6"/><path d="M1289.8 811.5 L1297 811.5 L1293.4 815.5 Z" fill="#606060"/><rect x="37.8" y="821.3" width="13" height="14" fill="#fff" stroke="#E0E0E0" stroke-width="0.6"/><path d="M46.5 824.8 L46.5 831.8 L42.5 828.3 Z" fill="#606060"/><rect x="149.4" y="821.3" width="838.3" height="14.2" fill="#fff"/><rect x="1271.3" y="821.3" width="14" height="14.2" fill="#fff" stroke="#E0E0E0" stroke-width="0.6"/><path d="M1276.3 824.8 L1276.3 831.8 L1280.3 828.3 Z" fill="#606060"/><g fill="none" stroke="#8A8A8A" stroke-width="0.8"><rect x="144.3" y="845.8" width="6.5" height="11.8"/><rect x="151.3" y="845.8" width="7" height="11.8"/></g><path d="M153 849 L156.5 853.5 M156.5 849 L153 853.5" stroke="#555" stroke-width="0.9"/><g stroke="#777" stroke-width="0.9"><path d="M906 853 L917 853 M906 855.5 L917 855.5 M906 858 L917 858"/></g><path d="M907 851.3 L911.5 846.5 L916 851.3 Z" fill="#555"/><path d="M958 846 L973 846 L973 855.5 L962 855.5 L959.5 858.5 L959.5 855.5 L958 855.5 Z" fill="#585858"/><rect x="1009.8" y="839.4" width="27.9" height="26" fill="#C8C8C8"/><g fill="none" stroke="#8A8A8A" stroke-width="0.9"><rect x="1016.5" y="845.5" width="15" height="13.5"/><path d="M1019.5 845.5 L1019.5 859 M1019.5 855.5 L1031.5 855.5"/><rect x="1022" y="848" width="7" height="5"/></g><g fill="none" stroke="#8A8A8A" stroke-width="0.9"><rect x="1045.3" y="845.5" width="5.5" height="5.5"/><rect x="1053.3" y="845.5" width="5.5" height="5.5"/><rect x="1045.3" y="853.3" width="5.5" height="5.5"/><rect x="1053.3" y="853.3" width="5.5" height="5.5"/></g><g fill="none" stroke="#8A8A8A" stroke-width="0.9"><path d="M1073.5 846 L1080.5 847.5 L1088 846 L1088 858.5 L1080.5 860 L1073.5 858.5 Z M1080.5 847.5 L1080.5 860"/><path d="M1075.5 849.5 L1078.5 850 M1075.5 852 L1078.5 852.5 M1075.5 854.5 L1078.5 855 M1082.5 850 L1085.5 849.5 M1082.5 852.5 L1085.5 852 M1082.5 855 L1085.5 854.5"/></g><g fill="none" stroke="#7A7A7A" stroke-width="0.9"><path d="M1102.5 846.5 L1117 846.5"/><rect x="1104" y="847" width="12" height="7.5"/><path d="M1110 854.5 L1110 858.5 M1107.5 858.5 L1112.5 858.5 M1106.5 849.5 L1113.5 849.5"/></g><rect x="1128" y="851.7" width="5" height="1.2" fill="#555"/><rect x="1137" y="852" width="85.7" height="0.8" fill="#9A9A9A"/><rect x="1179.3" y="849.5" width="0.9" height="5.5" fill="#B0B0B0"/><rect x="1186" y="847.8" width="4.2" height="9.8" fill="#6A6A6A"/><path d="M1226 852.3 L1232.7 852.3 M1229.35 849 L1229.35 855.6" stroke="#555" stroke-width="1.1"/><g fill="none" stroke="#8A8A8A" stroke-width="0.8"><rect x="1281.3" y="846" width="13.2" height="12.2"/></g><g stroke="#7A7A7A" stroke-width="0.8" fill="none"><path d="M1287.9 847.5 L1287.9 850 M1286.6 848.8 L1287.9 847.5 L1289.2 848.8 M1287.9 856.5 L1287.9 854 M1286.6 855.2 L1287.9 856.5 L1289.2 855.2 M1282.8 852.1 L1285.3 852.1 M1284 850.8 L1282.8 852.1 L1284 853.4 M1293 852.1 L1290.5 852.1 M1291.8 850.8 L1293 852.1 L1291.8 853.4"/></g></svg>
<span class="a rn" style="left:61.3px;top:150.5px;width:24px;text-align:center">14</span>
<span class="a rn" style="left:113.7px;top:150.5px;width:24px;text-align:center">13</span>
<span class="a rn" style="left:166.1px;top:150.5px;width:24px;text-align:center">12</span>
<span class="a rn" style="left:218.6px;top:150.5px;width:24px;text-align:center">11</span>
<span class="a rn" style="left:271.0px;top:150.5px;width:24px;text-align:center">10</span>
<span class="a rn" style="left:323.4px;top:150.5px;width:24px;text-align:center">9</span>
<span class="a rn" style="left:375.9px;top:150.5px;width:24px;text-align:center">8</span>
<span class="a rn" style="left:428.3px;top:150.5px;width:24px;text-align:center">7</span>
<span class="a rn" style="left:480.7px;top:150.5px;width:24px;text-align:center">6</span>
<span class="a rn" style="left:533.1px;top:150.5px;width:24px;text-align:center">5</span>
<span class="a rn" style="left:585.6px;top:150.5px;width:24px;text-align:center">4</span>
<span class="a rn" style="left:638.0px;top:150.5px;width:24px;text-align:center">3</span>
<span class="a rn" style="left:690.4px;top:150.5px;width:24px;text-align:center">2</span>
<span class="a rn" style="left:742.9px;top:150.5px;width:24px;text-align:center">1</span>
<span class="a rn" style="left:795.3px;top:150.5px;width:24px;text-align:center">0</span>
<span class="a rn" style="left:847.7px;top:150.5px;width:24px;text-align:center">1</span>
<span class="a rn" style="left:900.2px;top:150.5px;width:24px;text-align:center">2</span>
<span class="a rn" style="left:952.6px;top:150.5px;width:24px;text-align:center">3</span>
<span class="a rn" style="left:1005.0px;top:150.5px;width:24px;text-align:center">4</span>
<span class="a rn" style="left:1057.4px;top:150.5px;width:24px;text-align:center">5</span>
<span class="a rn" style="left:1109.9px;top:150.5px;width:24px;text-align:center">6</span>
<span class="a rn" style="left:1162.3px;top:150.5px;width:24px;text-align:center">7</span>
<span class="a rn" style="left:1214.7px;top:150.5px;width:24px;text-align:center">8</span>
<span class="a rn" style="left:1267.2px;top:150.5px;width:24px;text-align:center">9</span>
<span class="a rn" style="left:33px;top:189.8px;width:24px;height:10px;text-align:center;transform:rotate(-90deg)">6</span>
<span class="a rn" style="left:33px;top:242.2px;width:24px;height:10px;text-align:center;transform:rotate(-90deg)">5</span>
<span class="a rn" style="left:33px;top:294.7px;width:24px;height:10px;text-align:center;transform:rotate(-90deg)">4</span>
<span class="a rn" style="left:33px;top:347.1px;width:24px;height:10px;text-align:center;transform:rotate(-90deg)">3</span>
<span class="a rn" style="left:33px;top:399.5px;width:24px;height:10px;text-align:center;transform:rotate(-90deg)">2</span>
<span class="a rn" style="left:33px;top:452.0px;width:24px;height:10px;text-align:center;transform:rotate(-90deg)">1</span>
<span class="a rn" style="left:33px;top:504.4px;width:24px;height:10px;text-align:center;transform:rotate(-90deg)">0</span>
<span class="a rn" style="left:33px;top:556.8px;width:24px;height:10px;text-align:center;transform:rotate(-90deg)">1</span>
<span class="a rn" style="left:33px;top:609.3px;width:24px;height:10px;text-align:center;transform:rotate(-90deg)">2</span>
<span class="a rn" style="left:33px;top:661.7px;width:24px;height:10px;text-align:center;transform:rotate(-90deg)">3</span>
<span class="a rn" style="left:33px;top:714.1px;width:24px;height:10px;text-align:center;transform:rotate(-90deg)">4</span>
<span class="a rn" style="left:33px;top:766.5px;width:24px;height:10px;text-align:center;transform:rotate(-90deg)">5</span>
<span class="a" style="left:1.5px;top:195.5px;width:31px;height:11px;font-size:10.5px;color:#444;text-align:center;transform:rotate(-90deg)">缩略图</span>
<span class="a" style="left:6px;top:848px;font-size:10.55px;color:#444">幻灯片 第 36 张，共 62 张</span>
<span class="a" style="left:173.4px;top:848px;font-size:10.5px;color:#444">中文(中国)</span>
<span class="a" style="left:921.5px;top:847.8px;font-size:10.9px;color:#444">备注</span>
<span class="a" style="left:974.7px;top:847.8px;font-size:10.9px;color:#444">批注</span>
<span class="a" style="left:1242px;top:847.3px;font-size:11px;color:#444">160%</span>
<!-- CHROME-END -->
</body></html>
